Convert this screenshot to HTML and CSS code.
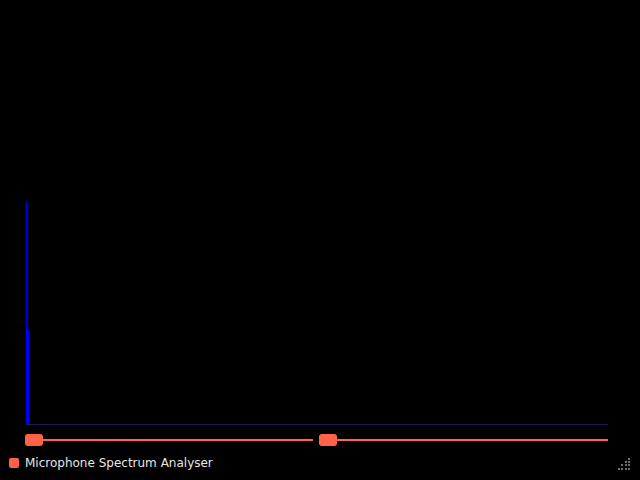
FILE: index.html
```html
<!DOCTYPE html>
<html>
<head>
<meta charset="utf-8">
<link rel="stylesheet" href="styles.css">
</head>
<body>
<div class="app">
  <div class="chart">
    <div class="plot">
      <div class="bar bar-thin" style="height:223px"></div>
      <div class="bar bar-wide" style="height:94px"></div>
    </div>
  </div>
  <div class="sliders">
    <div class="slider"><span class="handle"></span><span class="track"></span></div>
    <div class="slider"><span class="handle"></span><span class="track"></span></div>
  </div>
  <div class="footer">
    <span class="icon"></span>
    <span class="title">Microphone Spectrum Analyser</span>
    <svg class="grip" width="12" height="12" viewBox="0 0 12 12">
      <rect x="10" y="0" width="2" height="2"/>
      <rect x="7" y="3" width="2" height="2"/>
      <rect x="10" y="3" width="2" height="2"/>
      <rect x="3" y="6" width="2" height="2"/>
      <rect x="7" y="6" width="2" height="2"/>
      <rect x="10" y="6" width="2" height="2"/>
      <rect x="0" y="10" width="2" height="2"/>
      <rect x="3" y="10" width="2" height="2"/>
      <rect x="7" y="10" width="2" height="2"/>
      <rect x="10" y="10" width="2" height="2"/>
    </svg>
  </div>
</div>
</body>
</html>
```
FILE: styles.css
```css
html, body {
  margin: 0;
  padding: 0;
  background: #000;
}
.app {
  width: 640px;
  height: 480px;
  display: flex;
  flex-direction: column;
}
.chart {
  height: 425px;
  padding-left: 26px;
  box-sizing: border-box;
  display: flex;
}
.plot {
  width: 582px;
  height: 425px;
  display: flex;
  align-items: flex-end;
  border-bottom: 1px solid #1c1c5c;
  box-sizing: border-box;
}
.bar {
  background: #0000ff;
}
.bar-thin {
  width: 1px;
}
.bar-wide {
  width: 2px;
}
.sliders {
  margin-top: 9px;
  padding-left: 25px;
  display: flex;
  gap: 6px;
  height: 12px;
}
.slider {
  width: 288px;
  display: flex;
  align-items: center;
}
.slider:last-child {
  width: 289px;
}
.handle {
  width: 18px;
  height: 12px;
  border-radius: 3px;
  background: #ff6347;
  flex: none;
}
.track {
  flex: 1;
  height: 2px;
  background: #ff6347;
}
.footer {
  margin-top: 11px;
  height: 12px;
  display: flex;
  align-items: center;
  padding-left: 9px;
  padding-right: 10px;
}
.icon {
  width: 10px;
  height: 10px;
  border-radius: 2px;
  background: #ff6347;
  flex: none;
}
.title {
  margin-left: 6px;
  font-family: "DejaVu Sans", sans-serif;
  font-size: 12px;
  color: #e6e6e6;
  line-height: 12px;
}
.grip {
  margin-left: auto;
  fill: #6e6e6e;
  align-self: flex-end;
  margin-bottom: -1px;
}
```
